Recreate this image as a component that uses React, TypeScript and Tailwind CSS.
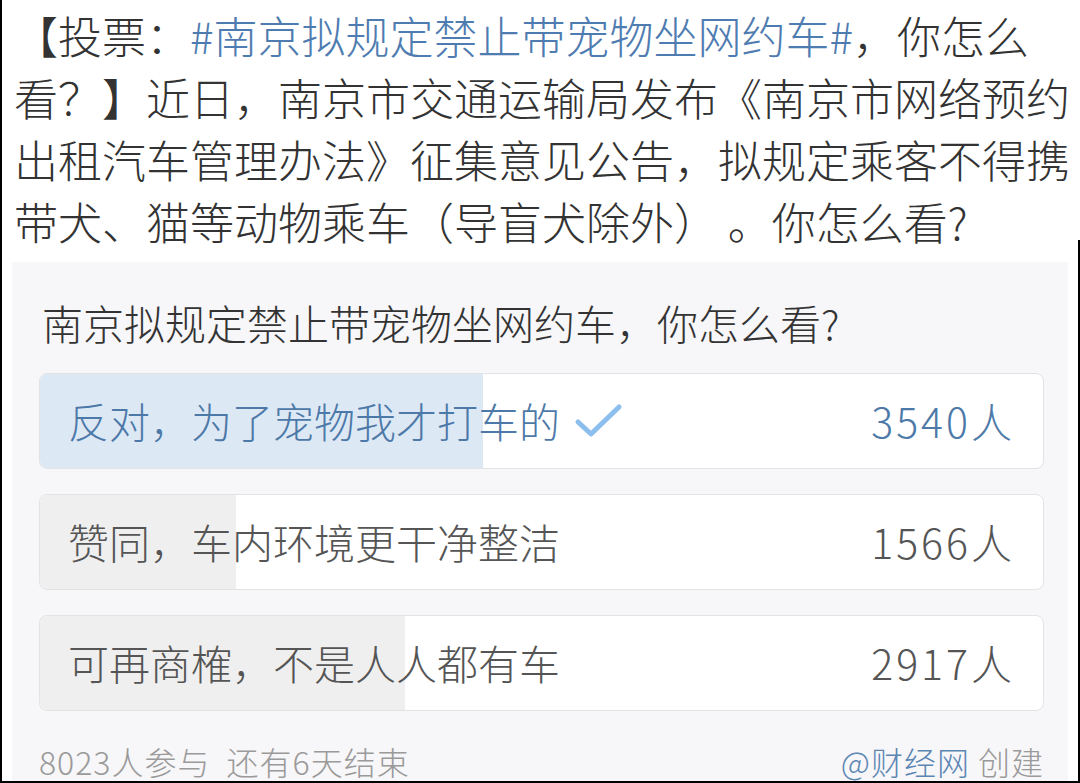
import React from "react";

const options = [
  { label: "反对，为了宠物我才打车的", count: 3540, chosen: true },
  { label: "赞同，车内环境更干净整洁", count: 1566, chosen: false },
  { label: "可再商榷，不是人人都有车", count: 2917, chosen: false },
];
const total = 8023;

function Check() {
  return (
    <svg width="50" height="36" viewBox="0 0 50 36" className="ml-[14px] shrink-0">
      <path d="M4 19 L17 31 L45 4" fill="none" stroke="#8cbfee" strokeWidth="5" strokeLinecap="round" strokeLinejoin="round" />
    </svg>
  );
}

export default function App() {
  return (
    <div
      className="w-[1080px] h-[783px] overflow-hidden bg-white border-l-2 border-b-2 border-black relative font-light"
      style={{ fontFamily: '"Noto Sans CJK SC", "Noto Sans", sans-serif' }}
    >
      <div className="absolute right-0 top-[240px] bottom-0 w-[2px] bg-black" />
      <p className="pl-[12px] pr-[8px] pt-[4px] text-[44px] leading-[62px] text-[#333]">
        <span>【投票：</span>
        <span className="text-[#4f7cb0]">#南京拟规定禁止带宠物坐网约车#</span>
        <span>，你怎么看？】近日，南京市交通运输局发布《南京市网络预约出租汽车管理办法》征集意见公告，拟规定乘客不得携带犬、猫等动物乘车（导盲犬除外）&nbsp;。你怎么看?</span>
      </p>
      <div className="mt-[10px] ml-[10px] mr-[12px] bg-[#f7f6f8] pt-[38px] pl-[27px] pr-[24px] h-[600px]">
        <div className="pl-[3px] text-[41px] leading-[44px] text-[#333]">南京拟规定禁止带宠物坐网约车，你怎么看?</div>
        <div className="mt-[29px] flex flex-col gap-[25px]">
          {options.map((o) => (
            <div
              key={o.label}
              className="relative h-[96px] rounded-[8px] border border-[#e3e3e6] bg-white overflow-hidden"
            >
              <div
                className={o.chosen ? "absolute left-0 top-0 bottom-0 bg-[#dde8f5]" : "absolute left-0 top-0 bottom-0 bg-[#efefef]"}
                style={{ width: `${(o.count / total) * 100}%` }}
              />
              <div className="relative h-full flex items-center pl-[28px] pr-[28px]">
                <span className={o.chosen ? "text-[41px] text-[#4d79a8]" : "text-[41px] text-[#555]"}>{o.label}</span>
                {o.chosen && <Check />}
                <span className={o.chosen ? "ml-auto text-[41px] text-[#4d79a8] tracking-[3px]" : "ml-auto text-[41px] text-[#555] tracking-[3px]"}>
                  {o.count}人
                </span>
              </div>
            </div>
          ))}
        </div>
        <div className="mt-[32px] flex items-center justify-between text-[32px] leading-[36px] text-[#9a9a9a]">
          <span className="tracking-[1px]">8023人参与&nbsp;&nbsp;还有6天结束</span>
          <span className="tracking-[1px]">
            <span className="text-[#5b86b4]">@财经网</span>&nbsp;创建
          </span>
        </div>
      </div>
    </div>
  );
}
